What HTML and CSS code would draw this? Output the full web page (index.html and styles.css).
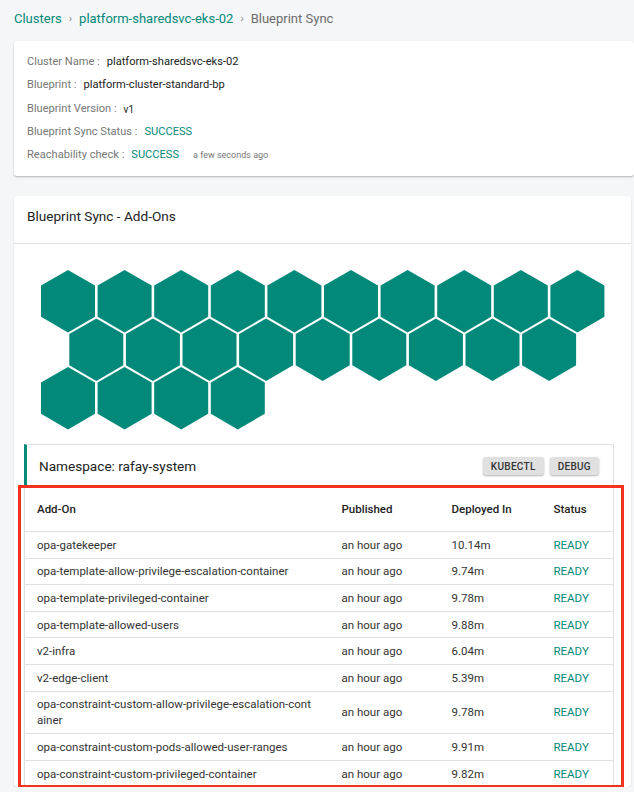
FILE: index.html
```html
<!DOCTYPE html>
<html lang="en">
<head>
<meta charset="utf-8">
<title>Blueprint Sync</title>
<link rel="stylesheet" href="styles.css">
</head>
<body>
<div class="page">
  <nav class="crumbs">
    <a class="crumb-link">Clusters</a>
    <span class="sep">›</span>
    <a class="crumb-link">platform-sharedsvc-eks-02</a>
    <span class="sep">›</span>
    <span class="crumb-current">Blueprint Sync</span>
  </nav>

  <section class="info-card">
    <div class="info-row"><span class="label">Cluster Name :</span><span class="value">platform-sharedsvc-eks-02</span></div>
    <div class="info-row"><span class="label">Blueprint :</span><span class="value">platform-cluster-standard-bp</span></div>
    <div class="info-row"><span class="label">Blueprint Version :</span><span class="value small">v1</span></div>
    <div class="info-row"><span class="label">Blueprint Sync Status :</span><span class="value ok">SUCCESS</span></div>
    <div class="info-row"><span class="label">Reachability check :</span><span class="value ok">SUCCESS</span><span class="ago">a few seconds ago</span></div>
  </section>

  <section class="addons-card">
    <header class="card-head">Blueprint Sync - Add-Ons</header>
    <div class="card-body">
      <svg class="hexmap" width="564" height="160" viewBox="0 0 564 160">
        <defs>
          <polygon id="hx" points="27,0 54,15.6 54,46.8 27,62.4 0,46.8 0,15.6"></polygon>
        </defs>
        <g class="hexes">
          <use href="#hx" x="0" y="0"/><use href="#hx" x="56.6" y="0"/><use href="#hx" x="113.2" y="0"/><use href="#hx" x="169.8" y="0"/><use href="#hx" x="226.4" y="0"/><use href="#hx" x="283" y="0"/><use href="#hx" x="339.6" y="0"/><use href="#hx" x="396.2" y="0"/><use href="#hx" x="452.8" y="0"/><use href="#hx" x="509.4" y="0"/>
          <use href="#hx" x="28.3" y="48.5"/><use href="#hx" x="84.9" y="48.5"/><use href="#hx" x="141.5" y="48.5"/><use href="#hx" x="198.1" y="48.5"/><use href="#hx" x="254.7" y="48.5"/><use href="#hx" x="311.3" y="48.5"/><use href="#hx" x="367.9" y="48.5"/><use href="#hx" x="424.5" y="48.5"/><use href="#hx" x="481.1" y="48.5"/>
          <use href="#hx" x="0" y="97"/><use href="#hx" x="56.6" y="97"/><use href="#hx" x="113.2" y="97"/><use href="#hx" x="169.8" y="97"/>
        </g>
      </svg>

      <div class="ns-head">
        <span class="ns-title">Namespace: rafay-system</span>
        <div class="ns-actions">
          <button class="btn">KUBECTL</button>
          <button class="btn">DEBUG</button>
        </div>
      </div>

      <div class="table-wrap">
        <table class="addon-table">
          <colgroup>
            <col class="c1"><col class="c2"><col class="c3"><col class="c4">
          </colgroup>
          <thead>
            <tr><th>Add-On</th><th>Published</th><th>Deployed In</th><th>Status</th></tr>
          </thead>
          <tbody>
            <tr><td>opa-gatekeeper</td><td>an hour ago</td><td>10.14m</td><td class="ready">READY</td></tr>
            <tr><td>opa-template-allow-privilege-escalation-container</td><td>an hour ago</td><td>9.74m</td><td class="ready">READY</td></tr>
            <tr><td>opa-template-privileged-container</td><td>an hour ago</td><td>9.78m</td><td class="ready">READY</td></tr>
            <tr><td>opa-template-allowed-users</td><td>an hour ago</td><td>9.88m</td><td class="ready">READY</td></tr>
            <tr><td>v2-infra</td><td>an hour ago</td><td>6.04m</td><td class="ready">READY</td></tr>
            <tr><td>v2-edge-client</td><td>an hour ago</td><td>5.39m</td><td class="ready">READY</td></tr>
            <tr><td>opa-constraint-custom-allow-privilege-escalation-container</td><td>an hour ago</td><td>9.78m</td><td class="ready">READY</td></tr>
            <tr><td>opa-constraint-custom-pods-allowed-user-ranges</td><td>an hour ago</td><td>9.91m</td><td class="ready">READY</td></tr>
            <tr><td>opa-constraint-custom-privileged-container</td><td>an hour ago</td><td>9.82m</td><td class="ready">READY</td></tr>
          </tbody>
        </table>
        <div class="highlight"></div>
      </div>
    </div>
  </section>
</div>
</body>
</html>
```

FILE: styles.css
```css
* { box-sizing: border-box; }

html, body {
  margin: 0;
  padding: 0;
  background: #f5f6f8;
  font-family: Roboto, "Liberation Sans", Arial, sans-serif;
  color: #222;
}

.page {
  padding: 10px 3px 0 14px;
}

.crumbs {
  display: flex;
  align-items: center;
  gap: 7px;
  height: 18px;
  line-height: 18px;
  font-size: 13px;
}

.crumb-link {
  color: #03897b;
}

.sep {
  color: #888;
  font-size: 11px;
}

.crumb-current {
  color: #6b6b6b;
}

.info-card {
  margin-top: 13px;
  margin-right: -3px;
  background: #fff;
  border-radius: 3px;
  box-shadow: 0 1px 2px rgba(0, 0, 0, 0.28);
  padding: 9px 13px 12px;
  height: 135px;
}

.info-row {
  display: flex;
  align-items: center;
  height: 23.3px;
  font-size: 11.1px;
}

.label {
  color: #777;
  margin-right: 7px;
}

.value {
  color: #222;
}

.value.small {
  font-size: 10px;
  padding-top: 2px;
}

.value.ok {
  color: #03897b;
}

.ago {
  margin-left: 14px;
  font-size: 9px;
  color: #777;
}

.addons-card {
  margin-top: 20px;
  background: #fff;
  border-radius: 4px;
  box-shadow: 0 1px 2px rgba(0, 0, 0, 0.12);
}

.card-head {
  padding: 12px 13px 0;
  height: 48px;
  line-height: 16px;
  font-size: 13.6px;
  color: #222;
  border-bottom: 1px solid #e2e2e2;
}

.card-body {
  padding: 26px 17px 0 10px;
}

.hexmap {
  display: block;
  margin-left: 17px;
}

.hexes {
  fill: #02897a;
}

.ns-head {
  margin-top: 14px;
  display: flex;
  align-items: center;
  justify-content: space-between;
  height: 42px;
  padding: 1px 14px 0 12px;
  border: 1px solid #e0e0e0;
  border-left: 3px solid #02897a;
  border-bottom: none;
}

.ns-title {
  font-size: 13.6px;
  color: #222;
}

.ns-actions {
  display: flex;
  gap: 6px;
}

.btn {
  font-family: Roboto, "Liberation Sans", Arial, sans-serif;
  font-size: 10px;
  font-weight: 500;
  letter-spacing: 0.3px;
  color: #333;
  background: #e0e0e0;
  border: none;
  border-radius: 3px;
  height: 18px;
  padding: 0 8px;
  box-shadow: 0 1px 2px rgba(0, 0, 0, 0.3);
}

.table-wrap {
  position: relative;
}

.addon-table {
  width: 100%;
  table-layout: fixed;
  border-collapse: collapse;
  border-left: 1px solid #e0e0e0;
  border-right: 1px solid #e0e0e0;
  font-size: 11.5px;
}

.c1 { width: 305px; }
.c2 { width: 110px; }
.c3 { width: 102px; }

.addon-table th {
  text-align: left;
  font-weight: 500;
  color: #222;
  line-height: 16px;
  padding: 15px 10px 14px 12px;
  border-bottom: 1px solid #e0e0e0;
}

.addon-table td {
  color: #333;
  line-height: 16px;
  padding: 4.8px 10px 4.8px 12px;
  border-bottom: 1px solid #e0e0e0;
  word-break: break-all;
  vertical-align: middle;
}

.addon-table td:first-child {
  padding-right: 17px;
}

.addon-table td.ready {
  color: #03897b;
}

.highlight {
  position: absolute;
  left: -6px;
  right: -10px;
  top: -1px;
  bottom: -1px;
  border: 3px solid #f4331f;
  pointer-events: none;
}
```
